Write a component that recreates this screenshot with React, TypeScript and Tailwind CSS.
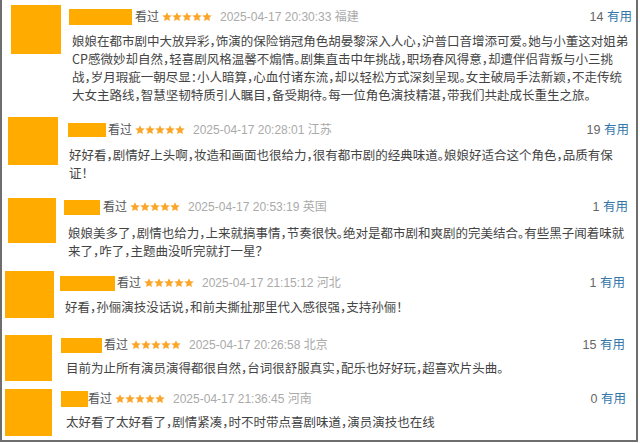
import React from 'react';

type Row = {
  box: string;
  avatar: string;
  col: string;
  user: string;
  userGap: string;
  time: string;
  loc: string;
  votes: number;
  text: string;
  lines: string[];
};

const rows: Row[] = [
  {
    box: 'h-[112px] pl-[9px] pr-[4px]',
    avatar: 'w-[50px] h-[49px]',
    col: 'ml-[8px] pt-[4px]',
    user: 'w-[63px] h-[16px]',
    userGap: 'ml-[3px]',
    time: '2025-04-17 20:30:33',
    loc: '福建',
    votes: 14,
    text: 'ml-[3px] mt-[7px]',
    lines: [
      '娘娘在都市剧中大放异彩，饰演的保险销冠角色胡晏黎深入人心，沪普口音增添可爱。她与小董这对姐弟',
      'CP感微妙却自然，轻喜剧风格温馨不煽情。剧集直击中年挑战，职场春风得意，却遭伴侣背叛与小三挑',
      '战，岁月瑕疵一朝尽显：小人暗算，心血付诸东流，却以轻松方式深刻呈现。女主破局手法新颖，不走传统',
      '大女主路线，智慧坚韧特质引人瞩目，备受期待。每一位角色演技精湛，带我们共赴成长重生之旅。',
    ],
  },
  {
    box: 'h-[81px] pl-[6px] pr-[7px]',
    avatar: 'w-[50px] h-[48px]',
    col: 'ml-[10px] pt-[5px]',
    user: 'w-[38px] h-[14px]',
    userGap: 'ml-[2px]',
    time: '2025-04-17 20:28:01',
    loc: '江苏',
    votes: 19,
    text: 'ml-[1px] mt-[8px]',
    lines: [
      '好好看，剧情好上头啊，妆造和画面也很给力，很有都市剧的经典味道。娘娘好适合这个角色，品质有保',
      '证！',
    ],
  },
  {
    box: 'h-[73px] pl-[6px] pr-[8px]',
    avatar: 'w-[48px] h-[45px]',
    col: 'ml-[8px] pt-[1px]',
    user: 'w-[36px] h-[15px]',
    userGap: 'ml-[3px]',
    time: '2025-04-17 20:53:19',
    loc: '英国',
    votes: 1,
    text: 'ml-[4px] mt-[9px]',
    lines: [
      '娘娘美多了，剧情也给力，上来就搞事情，节奏很快。绝对是都市剧和爽剧的完美结合。有些黑子闻着味就',
      '来了，咋了，主题曲没听完就打一星？',
    ],
  },
  {
    box: 'h-[64px] pl-[3px] pr-[11px]',
    avatar: 'w-[49px] h-[47px]',
    col: 'ml-[6px] pt-[4px]',
    user: 'w-[55px] h-[15px]',
    userGap: 'ml-[2px]',
    time: '2025-04-17 21:15:12',
    loc: '河北',
    votes: 1,
    text: 'ml-[5px] mt-[7px]',
    lines: ['好看，孙俪演技没话说，和前夫撕扯那里代入感很强，支持孙俪！'],
  },
  {
    box: 'h-[54px] pl-[3px] pr-[11px]',
    avatar: 'w-[47px] h-[46px]',
    col: 'ml-[9px] pt-[2px]',
    user: 'w-[41px] h-[15px]',
    userGap: 'ml-[2px]',
    time: '2025-04-17 20:26:58',
    loc: '北京',
    votes: 15,
    text: 'ml-[5px] mt-[6px]',
    lines: ['目前为止所有演员演得都很自然，台词很舒服真实，配乐也好好玩，超喜欢片头曲。'],
  },
  {
    box: 'h-[56px] pl-[3px] pr-[10px]',
    avatar: 'w-[47px] h-[47px]',
    col: 'ml-[9px] pt-[2px]',
    user: 'w-[27px] h-[16px]',
    userGap: 'ml-0',
    time: '2025-04-17 21:36:45',
    loc: '河南',
    votes: 0,
    text: 'ml-[5px] mt-[6px]',
    lines: ['太好看了太好看了，剧情紧凑，时不时带点喜剧味道，演员演技也在线'],
  },
];

function Stars() {
  return (
    <span className="ml-[3px] flex items-center">
      {[0, 1, 2, 3, 4].map((i) => (
        <svg key={i} width="10" height="10" viewBox="0 0 10 10" className="block">
          <path
            d="M5 0.3 6.4 3.25 9.7 3.6 7.25 5.8 7.95 9.1 5 7.45 2.05 9.1 2.75 5.8 0.3 3.6 3.6 3.25Z"
            fill="#fba62b"
          />
        </svg>
      ))}
    </span>
  );
}

function Comment({ r }: { r: Row }) {
  return (
    <div className={`flex items-start pt-[5px] ${r.box}`}>
      <div className={`shrink-0 bg-[#ffab00] ${r.avatar}`} />
      <div className={`flex-1 min-w-0 ${r.col}`}>
        <div className="flex items-center h-[16px] font-['Liberation_Sans','Noto_Sans_CJK_SC',sans-serif]">
          <div className={`shrink-0 bg-[#ffab00] ${r.user}`} />
          <span className={`text-[12px] leading-none text-[#555] ${r.userGap}`}>看过</span>
          <Stars />
          <span className="ml-[8px] text-[12px] leading-none text-[#aaa] whitespace-nowrap">
            {r.time} {r.loc}
          </span>
          <span className="ml-auto text-[12.5px] leading-none whitespace-nowrap">
            <span className="text-[#666]">{r.votes}</span>{' '}
            <span className="text-[#3377aa]">有用</span>
          </span>
        </div>
        <div
          className={`text-[12.5px] leading-[18px] text-[#444] font-['Noto_Sans_CJK_SC',sans-serif] [font-feature-settings:'halt'] ${r.text}`}
        >
          {r.lines.map((l, i) => (
            <div key={i} className="whitespace-nowrap">
              {l}
            </div>
          ))}
        </div>
      </div>
    </div>
  );
}

export default function App() {
  return (
    <div className="w-[640px] h-[443px] bg-white overflow-hidden">
      <div className="w-[638px] h-[442px] border-l-2 border-r-2 border-b-2 border-[#6e6e6e] bg-white">
        {rows.map((r, i) => (
          <Comment key={i} r={r} />
        ))}
      </div>
    </div>
  );
}
